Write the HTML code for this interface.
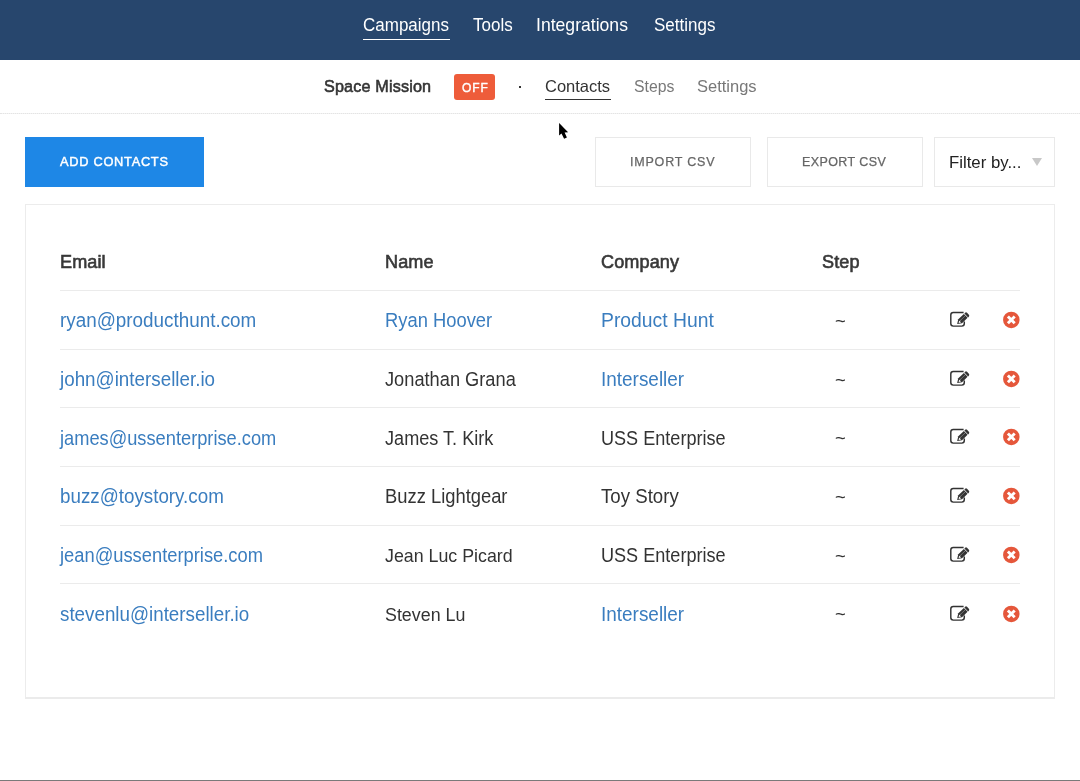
<!DOCTYPE html>
<html><head><meta charset="utf-8">
<style>
*{box-sizing:border-box;margin:0;padding:0}
html,body{width:1080px;height:781px;overflow:hidden;background:#fff;font-family:"Liberation Sans",sans-serif;position:relative}
.a{position:absolute;white-space:nowrap;line-height:1}
#wrap{position:absolute;left:0;top:0;width:1080px;height:781px;will-change:transform}
#hdr{position:absolute;left:0;top:0;width:1080px;height:60px;background:#27466d}
.nav{color:#fff;font-size:17px;margin-top:0px;transform:scaleY(1.09);transform-origin:0 14.4px}
#sub{position:absolute;left:0;top:60px;width:1080px;height:54px;border-bottom:1px dotted #e4e4e4}
.sn{font-size:16.5px;color:#787878}
.btn{position:absolute;top:137px;height:50px;border:1px solid #e9e9e9;background:#fff}
.bt{font-size:12.5px;color:#666;letter-spacing:0.8px;-webkit-text-stroke:0.25px #666}
#card{position:absolute;left:25px;top:204px;width:1030px;height:495px;border:1px solid #ececec;border-bottom:2px solid #ebebeb}
.th{font-size:18.1px;color:#383838;-webkit-text-stroke:0.6px #383838;transform:scaleY(1.05);transform-origin:0 15px;letter-spacing:0.1px}
.td{font-size:18px;color:#333}
.lk,.row .lk,.cells .lk{color:#3a7dbf}
.ln{position:absolute;left:60px;width:960px;height:1px;background:#ebebeb}
.row{position:absolute;left:0;width:1080px;height:58.74px}
.row .cells{position:absolute;left:60px;top:19.2px;height:24px;line-height:24px;font-size:18.5px;white-space:nowrap}
.cells span{display:inline-block;color:#333;transform:scaleY(1.08);transform-origin:0 17.5px;vertical-align:baseline}
.row .c1{width:325px;font-size:18.8px}.row .c2{width:216px;font-size:18.2px}.row .c3{font-size:18.6px}
.row .c4{position:absolute;left:830px;top:18.8px;width:21px;line-height:24px;text-align:center;font-size:18.5px;color:#333}
.ed{position:absolute;left:945px;top:18px}.dl{position:absolute;left:999px;top:18px}
</style></head><body><div id="wrap">
<div id="hdr"></div>
<div class="a nav" style="left:363px;top:17px">Campaigns</div>
<div style="position:absolute;left:363px;top:39px;width:87px;height:1px;background:#fff"></div>
<div class="a nav" style="left:473px;top:17px">Tools</div>
<div class="a nav" style="left:536px;top:17px;font-size:17.6px;margin-top:-0.5px;transform-origin:0 14.9px">Integrations</div>
<div class="a nav" style="left:654px;top:17px">Settings</div>

<div style="position:absolute;left:0;top:113px;width:1080px;height:1px;background:#f2f2f2"></div><div id="sub"></div>
<div class="a" style="left:324px;top:77.5px;font-size:16.2px;letter-spacing:0.15px;color:#333;-webkit-text-stroke:0.55px #333;transform:scaleY(1.06);transform-origin:0 13.7px">Space Mission</div>
<div class="a" style="left:454px;top:74px;width:41px;height:26px;background:#ee5c3a;border-radius:3px"></div>
<div class="a" style="left:462px;top:81.8px;font-size:12px;color:#fff;letter-spacing:0.9px;-webkit-text-stroke:0.4px #fff">OFF</div>
<div class="a" style="left:519px;top:86px;width:2px;height:2px;background:#333"></div>
<div class="a sn" style="left:545px;top:78px;color:#333">Contacts</div>
<div style="position:absolute;left:545px;top:98.6px;width:66px;height:1.6px;background:#333"></div>
<div class="a sn" style="left:634px;top:78px;font-size:15.8px;top:78.5px">Steps</div>
<div class="a sn" style="left:697px;top:78px">Settings</div>

<div class="btn" style="left:25px;width:179px;background:#1e87e6;border-color:#1e87e6"></div>
<div class="a bt" style="left:60px;top:156px;color:#fff;font-size:12.8px;letter-spacing:0.72px;-webkit-text-stroke:0.45px #fff">ADD CONTACTS</div>
<div class="btn" style="left:595px;width:156px"></div>
<div class="a bt" style="left:630px;top:156px">IMPORT CSV</div>
<div class="btn" style="left:767px;width:156px"></div>
<div class="a bt" style="left:802px;top:156px;letter-spacing:0.4px">EXPORT CSV</div>
<div class="btn" style="left:934px;width:121px"></div>
<div class="a" style="left:949px;top:154.6px;font-size:16.8px;color:#222">Filter by...</div>
<div class="a" style="left:1032px;top:158px;width:0;height:0;border-left:5.6px solid transparent;border-right:5.6px solid transparent;border-top:8px solid #c8c8c8"></div>

<div id="card"></div>
<div class="a th" style="left:60px;top:253.4px">Email</div>
<div class="a th" style="left:385px;top:253.4px">Name</div>
<div class="a th" style="left:601px;top:253.4px">Company</div>
<div class="a th" style="left:822px;top:253.4px">Step</div>
<div class="ln" style="top:290px"></div>
<div class="ln" style="top:349px"></div>
<div class="ln" style="top:407px"></div>
<div class="ln" style="top:466px"></div>
<div class="ln" style="top:525px"></div>
<div class="ln" style="top:583px"></div>

<svg width="0" height="0" style="position:absolute">
<symbol id="edit" viewBox="0 0 30 24">
<path d="M18.6 4.45H8.3Q5.8 4.45 5.8 6.95V15.6Q5.8 18.1 8.3 18.1H16.8Q19.3 18.1 19.3 15.6V13.4" fill="none" stroke="#333" stroke-width="1.45"/>
<g transform="translate(12.1 16.1) rotate(-43.5)">
<path d="M0 0L4.2 -2.7H11.9V2.7H4.2Z" fill="#333"/>
<path d="M12.6 -2.7H13.6A1.35 1.35 0 0 1 14.95 -1.35V1.35A1.35 1.35 0 0 1 13.6 2.7H12.6Z" fill="#333"/>
<path d="M1.9 0.3L4 -1.2V1.6Z" fill="#fff"/>
<path d="M4.9 -0.4H11.5" stroke="#fff" stroke-width="0.6" stroke-dasharray="0.9 0.7"/>
</g>
</symbol>
<symbol id="del" viewBox="0 0 25 24">
<circle cx="12.3" cy="11.9" r="8.25" fill="#e5573b"/>
<path d="M8.9 8.5L15.7 15.3M15.7 8.5L8.9 15.3" stroke="#fff" stroke-width="2.9"/>
</symbol>
</svg>
<div class="row" style="top:290.00px">
<div class="cells"><span class="c1 lk" style="font-size:18.87px">ryan@producthunt.com</span><span class="c2 lk" style="font-size:18.37px">Ryan Hoover</span><span class="c3 lk" style="font-size:19.33px">Product Hunt</span></div><div class="c4">~</div>
<svg class="ed" width="30" height="24" viewBox="0 0 30 24"><use href="#edit"/></svg><svg class="dl" width="25" height="24" viewBox="0 0 25 24"><use href="#del"/></svg></div>
<div class="row" style="top:348.74px">
<div class="cells"><span class="c1 lk" style="font-size:18.82px">john@interseller.io</span><span class="c2" style="font-size:18.24px">Jonathan Grana</span><span class="c3 lk" style="font-size:18.95px">Interseller</span></div><div class="c4">~</div>
<svg class="ed" width="30" height="24" viewBox="0 0 30 24"><use href="#edit"/></svg><svg class="dl" width="25" height="24" viewBox="0 0 25 24"><use href="#del"/></svg></div>
<div class="row" style="top:407.48px">
<div class="cells"><span class="c1 lk" style="font-size:18.26px">james@ussenterprise.com</span><span class="c2" style="font-size:18.13px">James T. Kirk</span><span class="c3" style="font-size:18.09px">USS Enterprise</span></div><div class="c4">~</div>
<svg class="ed" width="30" height="24" viewBox="0 0 30 24"><use href="#edit"/></svg><svg class="dl" width="25" height="24" viewBox="0 0 25 24"><use href="#del"/></svg></div>
<div class="row" style="top:466.22px">
<div class="cells"><span class="c1 lk" style="font-size:18.79px">buzz@toystory.com</span><span class="c2" style="font-size:18.36px">Buzz Lightgear</span><span class="c3" style="font-size:18.67px">Toy Story</span></div><div class="c4">~</div>
<svg class="ed" width="30" height="24" viewBox="0 0 30 24"><use href="#edit"/></svg><svg class="dl" width="25" height="24" viewBox="0 0 25 24"><use href="#del"/></svg></div>
<div class="row" style="top:524.96px">
<div class="cells"><span class="c1 lk" style="font-size:18.34px">jean@ussenterprise.com</span><span class="c2" style="font-size:17.81px">Jean Luc Picard</span><span class="c3" style="font-size:18.09px">USS Enterprise</span></div><div class="c4">~</div>
<svg class="ed" width="30" height="24" viewBox="0 0 30 24"><use href="#edit"/></svg><svg class="dl" width="25" height="24" viewBox="0 0 25 24"><use href="#del"/></svg></div>
<div class="row" style="top:583.70px">
<div class="cells"><span class="c1 lk" style="font-size:18.79px">stevenlu@interseller.io</span><span class="c2" style="font-size:17.85px">Steven Lu</span><span class="c3 lk" style="font-size:18.95px">Interseller</span></div><div class="c4">~</div>
<svg class="ed" width="30" height="24" viewBox="0 0 30 24"><use href="#edit"/></svg><svg class="dl" width="25" height="24" viewBox="0 0 25 24"><use href="#del"/></svg></div>
<svg style="position:absolute;left:550px;top:115px" width="30" height="30" viewBox="0 0 30 30"><path d="M9.1 7.9V20.5L11.5 18.4L14.1 23.7L16.9 22.6L14.6 17.6L18.1 17.3Z" fill="#000" stroke="#fff" stroke-width="1.2" stroke-linejoin="round" paint-order="stroke"/></svg>
<div style="position:absolute;left:0;top:780px;width:1080px;height:1px;background:#7a7a7a"></div>
</div></body></html>
